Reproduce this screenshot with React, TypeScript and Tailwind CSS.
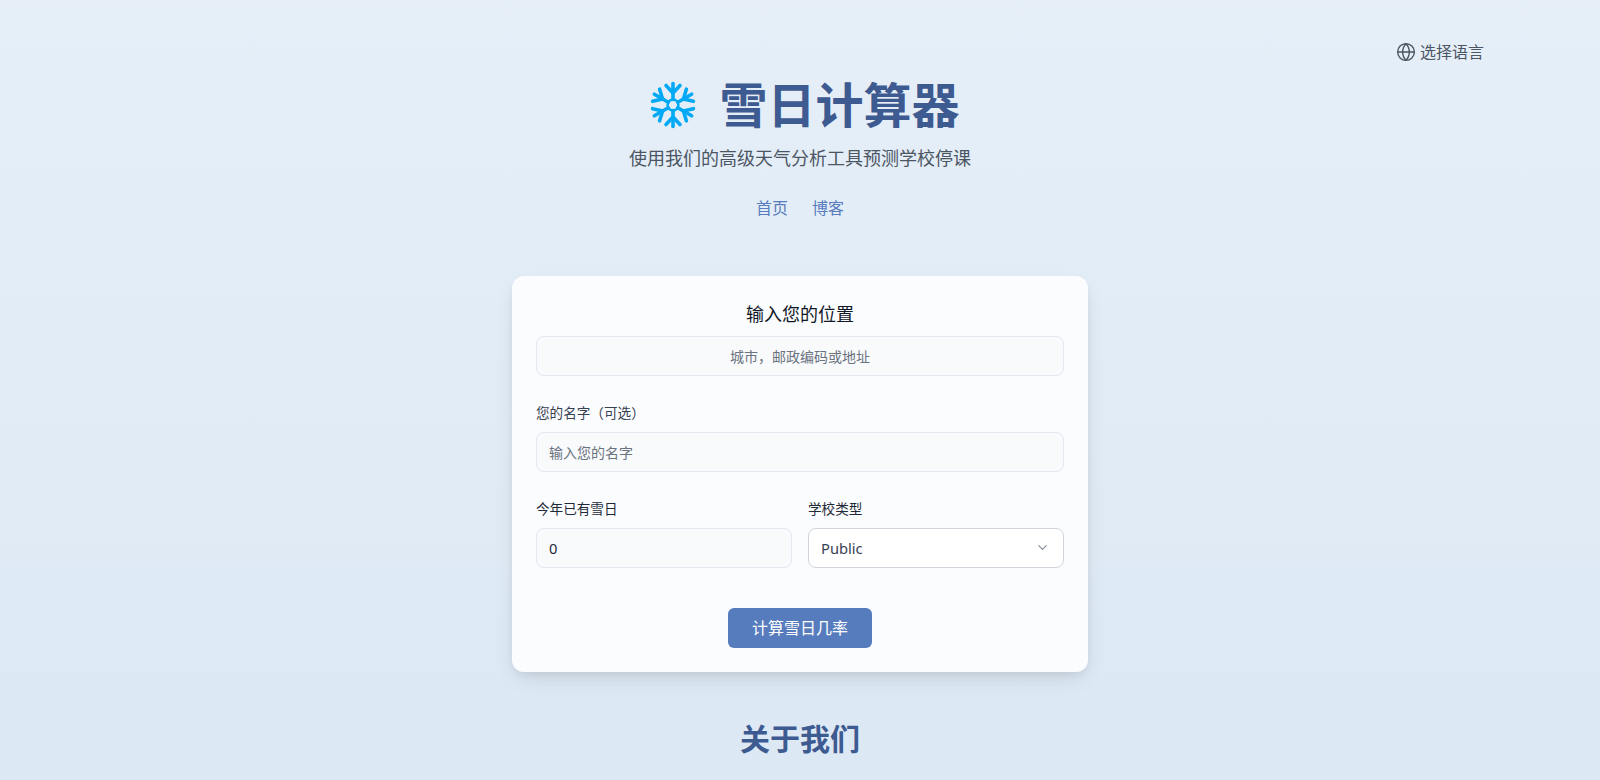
import { Globe, ChevronDown } from "lucide-react";

const font = "font-['Noto_Sans','Noto_Sans_CJK_SC',sans-serif]";
const fieldBase =
  "w-full h-10 rounded-lg border border-[#e2e8f0] bg-[#f8fafc] px-3 text-sm text-[#1f2937] placeholder:text-[#6b7280] outline-none";

function Snowflake() {
  const angles = [0, 60, 120, 180, 240, 300];
  return (
    <svg width="48" height="48" viewBox="0 0 48 48" fill="none" stroke="#03a9f4" strokeWidth="3.6" strokeLinecap="round" strokeLinejoin="round">
      <circle cx="24" cy="24" r="5.4" strokeWidth="2.6" />
      {angles.map((a) => (
        <g key={a} transform={`rotate(${a} 24 24)`}>
          <path d="M24 18.5V2.5" />
          <path d="M17 4.5 24 12 31 4.5" />
        </g>
      ))}
    </svg>
  );
}

export default function App() {
  return (
    <div className={`h-screen overflow-hidden bg-gradient-to-b from-[#e6eff8] to-[#dce8f4] ${font}`}>
      <div className="mx-auto max-w-[1536px] px-8">
        <div className="flex justify-end pt-[40px] pr-[52px]">
          <button className="flex h-6 items-center gap-1 text-base text-[#4b5563]">
            <Globe size={20} strokeWidth={1.7} />
            <span>选择语言</span>
          </button>
        </div>
        <header className="mt-[13px] flex flex-col items-center">
          <h1 className="ml-[9px] flex h-[56px] items-center gap-[22px] text-5xl font-bold text-[#3d5a91]">
            <Snowflake />
            <span>雪日计算器</span>
          </h1>
          <p className="mt-[11px] text-lg leading-7 text-[#4b5563]">使用我们的高级天气分析工具预测学校停课</p>
          <nav className="mt-6 flex gap-6 text-base leading-6 text-[#587cbd]">
            <a>首页</a>
            <a>博客</a>
          </nav>
        </header>
        <main className="mx-auto mt-[56px] w-[576px] rounded-xl bg-white/85 p-6 shadow-[0_10px_25px_-5px_rgba(0,0,0,0.1),0_4px_10px_-2px_rgba(0,0,0,0.08)]">
          <div className="text-center text-lg leading-7 text-[#111827]">输入您的位置</div>
          <input className={`${fieldBase} mt-2 text-center`} placeholder="城市，邮政编码或地址" />
          <label className="mt-[27px] mb-[9px] block text-[13.6px] leading-5 text-[#374151]">您的名字（可选）</label>
          <input className={fieldBase} placeholder="输入您的名字" />
          <div className="mt-[26px] grid grid-cols-2 gap-4">
            <div>
              <label className="mt-[1px] mb-[9px] block text-[13.6px] leading-5 text-[#1f2937]">今年已有雪日</label>
              <input className="h-10 w-full rounded-lg border border-[#e2e8f0] bg-[#f8fafc] px-3 text-[14.7px] text-[#1f2937] outline-none" defaultValue="0" />
            </div>
            <div>
              <label className="mt-[1px] mb-[9px] block text-[13.6px] leading-5 text-[#1f2937]">学校类型</label>
              <div className="relative">
                <select className="h-10 w-full appearance-none rounded-lg border border-[#d1d5db] bg-white px-3 text-[14.7px] text-[#374151] outline-none">
                  <option>Public</option>
                </select>
                <ChevronDown size={15} className="absolute right-[14px] top-[12px] text-[#8b929c]" />
              </div>
            </div>
          </div>
          <div className="mt-10 flex justify-center">
            <button className="h-10 w-36 rounded-md bg-[#567cbd] text-base text-white">计算雪日几率</button>
          </div>
        </main>
        <h2 className="mt-[49px] text-center text-3xl font-bold leading-9 text-[#3d5a91]">关于我们</h2>
      </div>
    </div>
  );
}
